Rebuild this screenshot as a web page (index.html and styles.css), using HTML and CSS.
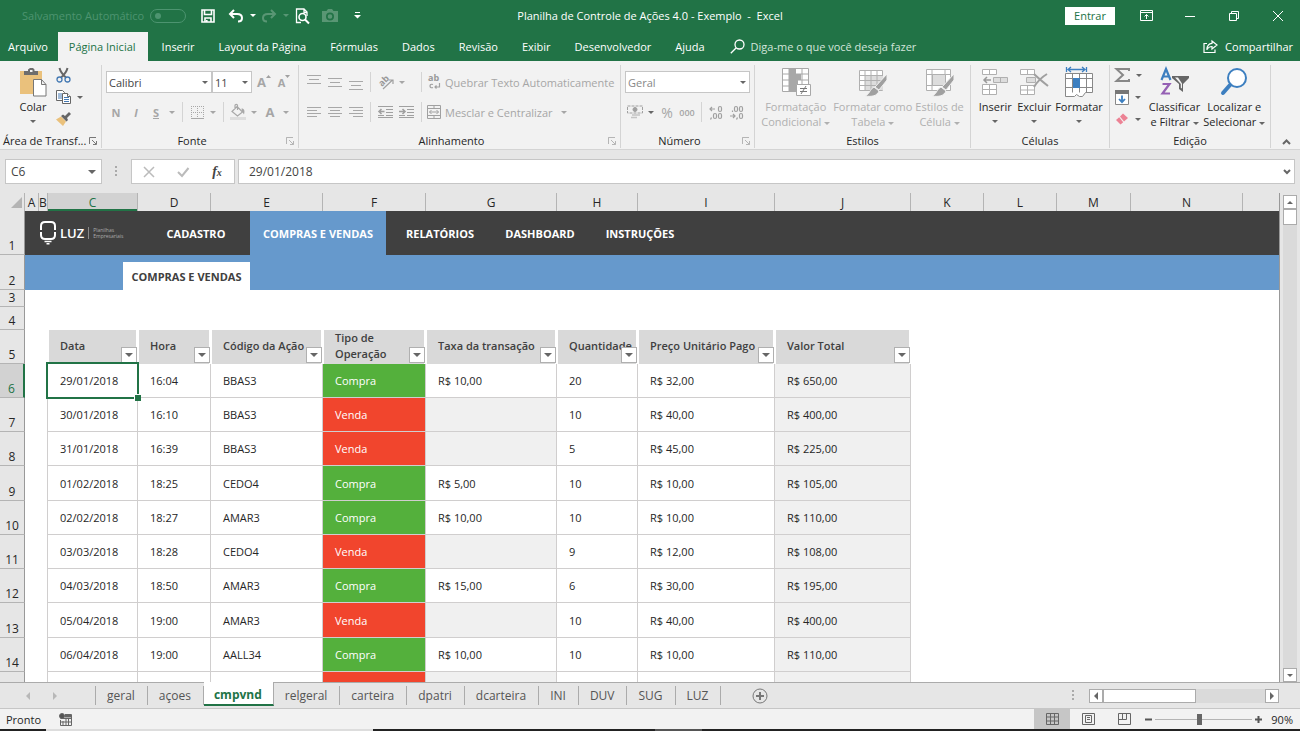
FILE: index.html
```html
<!DOCTYPE html>
<html lang="pt-BR">
<head>
    <meta charset="UTF-8">
    <meta name="viewport" content="width=device-width, initial-scale=1.0">
    <title>Planilha de Controle de Ações 4.0 - Exemplo - Excel</title>
    <link rel="stylesheet" href="styles.css">
</head>
<body>
    <header class="titlebar">
        <div class="quick-access">
            <label class="autosave">Salvamento Automático <input type="checkbox" disabled></label>
            <button class="qa-save" type="button" aria-label="Salvar">
                <svg width="14" height="14" viewBox="0 0 14 14" fill="none" stroke="#fff" stroke-width="1.6"><path d="M1 1h12v12H1zM3.500 1v4.500h7V1M4 13V9h6v4M5.800 11v2"/></svg>
            </button>
            <button class="qa-btn" type="button" aria-label="Desfazer">
                <svg width="16" height="14" viewBox="0 0 16 14" fill="none" stroke="#fff" stroke-width="2"><path d="M6 1L2 5l4 4M2.500 5h6.500c3 0 5 1.500 5 4 0 2.200-1.500 3.500-4 3.500"/></svg>
            </button>
            <button class="drop light" type="button" aria-label="Opções de desfazer"><i class="caret"></i></button>
            <button class="qa-btn faded" type="button" aria-label="Refazer">
                <svg width="16" height="14" viewBox="0 0 16 14" fill="none" stroke="#fff" stroke-width="2"><path d="M10 1l4 4-4 4M13.500 5H7c-3 0-5 1.500-5 4 0 2.200 1.500 3.500 4 3.500"/></svg>
            </button>
            <button class="drop light faded" type="button" aria-label="Opções de refazer"><i class="caret"></i></button>
            <button class="qa-btn" type="button" aria-label="Visualizar impressão">
                <svg width="15" height="16" viewBox="0 0 15 16" fill="none" stroke="#fff" stroke-width="1.300"><path d="M6 14.500H1.500V1H9l3 3v4M9 1v3.500h3"/><circle cx="7.500" cy="9" r="3.500" stroke-width="1.600"/><path d="M10 11.500l4 4" stroke-width="2"/></svg>
            </button>
            <button class="qa-cam faded" type="button" aria-label="Câmera">
                <svg width="16" height="13" viewBox="0 0 16 13"><path fill="#fff" fill-rule="evenodd" d="M0 2h4.500L6 0h4l1.500 2H16v11H0zM8 3.500a4 4 0 100 8 4 4 0 000-8zM8 5.200a2.300 2.300 0 110 4.600 2.300 2.300 0 010-4.600z"/></svg>
            </button>
            <button class="qa-more" type="button" aria-label="Personalizar barra">
                <svg width="7" height="7" viewBox="0 0 7 7" fill="#fff"><path d="M1 0h5v1H1zM0 3h7L3.500 6.500z"/></svg>
            </button>
        </div>
        <div class="doc-title">Planilha de Controle de Ações 4.0 - Exemplo &nbsp;-&nbsp; Excel</div>
        <div class="window-controls">
            <button class="sign-in" type="button">Entrar</button>
            <button class="win-btn" type="button" aria-label="Opções da faixa de opções">
                <svg width="13" height="11" viewBox="0 0 13 11" fill="none" stroke="#fff"><path d="M.5.5h12v10H.5zM.5 2.500h12M6.500 9V4.500M4.500 6.500l2-2 2 2"/></svg>
            </button>
            <button class="win-btn" type="button" aria-label="Minimizar">
                <svg width="10" height="10" viewBox="0 0 10 10" stroke="#fff"><path d="M0 5.500h10"/></svg>
            </button>
            <button class="win-btn" type="button" aria-label="Restaurar">
                <svg width="10" height="10" viewBox="0 0 10 10" fill="none" stroke="#fff"><path d="M.5 2.500h7v7h-7zM2.500 2.500v-2h7v7h-2"/></svg>
            </button>
            <button class="win-btn" type="button" aria-label="Fechar">
                <svg width="10" height="10" viewBox="0 0 10 10" stroke="#fff"><path d="M0 0l10 10M10 0L0 10"/></svg>
            </button>
        </div>
    </header>

    <nav class="ribbon-tabs">
        <a class="first" href="#">Arquivo</a>
        <a class="active" href="#">Página Inicial</a>
        <a href="#">Inserir</a>
        <a href="#">Layout da Página</a>
        <a href="#">Fórmulas</a>
        <a href="#">Dados</a>
        <a href="#">Revisão</a>
        <a href="#">Exibir</a>
        <a href="#">Desenvolvedor</a>
        <a href="#">Ajuda</a>
        <a class="tell-me" href="#">
            <svg width="15" height="15" viewBox="0 0 15 15" fill="none" stroke="#fff" stroke-width="1.300"><circle cx="9.500" cy="5.500" r="4.500"/><path d="M6.300 8.700L.8 14.200"/></svg>
            Diga-me o que você deseja fazer
        </a>
        <a class="share" href="#">
            <svg width="15" height="13" viewBox="0 0 15 13" fill="none" stroke="#fff" stroke-width="1.200"><path d="M4 3.500H1v9h11V9.500M9 1l5 4-5 4V6.500C6.500 6.500 5 7.500 3.800 9.800 4 6 6 3.500 9 3.300z"/></svg>
            Compartilhar
        </a>
    </nav>

    <section class="ribbon">
        <div class="group clipboard">
            <div class="group-body big-row">
                <button class="big-btn paste" type="button">
                    <svg width="28" height="30" viewBox="0 0 28 30"><path fill="#eac17c" d="M1 4h22v23H1z"/><path fill="#6d6d6d" d="M5 4h4V2.500L11 1h3l1.500 1.500V4H19v4H5z"/><path fill="#f2f2f2" d="M11 3h2.500v2H11z"/><path fill="#fff" stroke="#777" d="M14.500 12.500h8l4.500 5v11.500H14.500zM22.500 12.500v5H27"/></svg>
                    <span>Colar</span><i class="caret"></i>
                </button>
                <div class="stack">
                    <button class="small-btn" type="button" aria-label="Recortar">
                        <svg width="15" height="15" viewBox="0 0 15 15" fill="none"><path d="M3.500 0c1 4 3.500 7 6.500 9.500M11.500 0c-1 4-3.500 7-6.500 9.500" stroke="#666" stroke-width="2"/><circle cx="3.500" cy="11.500" r="2.500" stroke="#4479b3" stroke-width="1.300"/><circle cx="11.500" cy="11.500" r="2.500" stroke="#4479b3" stroke-width="1.300"/></svg>
                    </button>
                    <button class="small-btn" type="button" aria-label="Copiar">
                        <svg width="15" height="14" viewBox="0 0 15 14" fill="#fff" stroke="#666"><path d="M.5.5h6l2 2v8h-8z"/><path d="M2 4h4M2 6h4M2 8h4" stroke="#4479b3"/><path d="M6.500 3.500h5l3 3v7h-8z"/><path d="M11.500 3.500v3h3"/><path d="M8 7.500h5M8 9.500h5M8 11.500h5" stroke="#4479b3"/></svg>
                        <i class="caret"></i>
                    </button>
                    <button class="small-btn" type="button" aria-label="Pincel de formatação">
                        <svg width="15" height="14" viewBox="0 0 15 14"><path fill="#eac17c" d="M0 7.500l5-3 5 5L7 14z"/><path fill="#666" d="M5 4l2-1.500 2 1.500L13 0l2 2-4 4 1 2-1.500 1.500z"/></svg>
                    </button>
                </div>
            </div>
            <div class="group-label">Área de Transf... <svg class="launcher" width="9" height="9" viewBox="0 0 9 9" fill="none" stroke="#777"><path d="M.5 7V.5H7M3 3l4 4M7.500 4v3.500H4"/></svg></div>
        </div>

        <div class="group font">
            <div class="group-body rows">
                <div class="row">
                    <select class="font-name" aria-label="Fonte"><option>Calibri</option></select>
                    <select class="font-size" aria-label="Tamanho da fonte"><option>11</option></select>
                    <button class="icon-btn" type="button" aria-label="Aumentar fonte"><b class="grow">A</b><svg width="5" height="14" viewBox="0 0 5 14"><path fill="#a0a0a0" d="M0 3h5L2.500 0z"/></svg></button>
                    <button class="icon-btn" type="button" aria-label="Diminuir fonte"><b>A</b><svg width="5" height="14" viewBox="0 0 5 14"><path fill="#a0a0a0" d="M0 0h5L2.500 3z"/></svg></button>
                </div>
                <div class="row">
                    <button class="icon-btn" type="button"><b>N</b></button>
                    <button class="icon-btn" type="button"><b class="italic">I</b></button>
                    <button class="icon-btn" type="button"><b><u>S</u></b></button>
                    <button class="drop" type="button" aria-label="Sublinhado"><i class="caret"></i></button>
                    <span class="sep"></span>
                    <button class="icon-btn" type="button" aria-label="Bordas"><svg width="13" height="13" viewBox="0 0 13 13" fill="none" stroke="#a8a8a8"><path stroke-dasharray="1 1" d="M.5 0v12M6.500 0v12M12.500 0v12M0 .5h13M0 6.500h13"/><path d="M0 12.500h13"/></svg></button>
                    <button class="drop" type="button" aria-label="Opções de bordas"><i class="caret"></i></button>
                    <span class="sep"></span>
                    <button class="icon-btn" type="button" aria-label="Cor de preenchimento"><svg width="16" height="16" viewBox="0 0 16 16" fill="none" stroke="#a8a8a8" stroke-width="1.200"><path d="M7 2.500l5.500 5.500-5 4L2 7.500zM5 5V1.500c0-1.500 2.500-1.500 2.500 0V6"/><path fill="#a8a8a8" stroke="none" d="M11.500 4.500c3 0 3.500 2.500 2.500 6-.8-1-1-2-2-3z"/><path stroke="#ddd" stroke-width="3" d="M0 14.500h16"/></svg></button>
                    <button class="drop" type="button" aria-label="Opções de preenchimento"><i class="caret"></i></button>
                    <button class="icon-btn" type="button"><b class="grow">A</b></button>
                    <button class="drop" type="button" aria-label="Cor da fonte"><i class="caret"></i></button>
                </div>
            </div>
            <div class="group-label">Fonte <svg class="launcher off" width="9" height="9" viewBox="0 0 9 9" fill="none" stroke="#777"><path d="M.5 7V.5H7M3 3l4 4M7.500 4v3.500H4"/></svg></div>
        </div>

        <div class="group alignment">
            <div class="group-body rows">
                <div class="row">
                    <button class="icon-btn" type="button" aria-label="Alinhar em cima"><svg width="14" height="15" viewBox="0 0 14 15" stroke="#a8a8a8"><path d="M0 .5h14M2 4.500h10M0 8.500h14"/></svg></button>
                    <button class="icon-btn" type="button" aria-label="Alinhar no meio"><svg width="14" height="15" viewBox="0 0 14 15" stroke="#a8a8a8"><path d="M0 3.500h14M2 7.500h10M0 11.500h14"/></svg></button>
                    <button class="icon-btn" type="button" aria-label="Alinhar embaixo"><svg width="14" height="15" viewBox="0 0 14 15" stroke="#a8a8a8"><path d="M0 6.500h14M2 10.500h10M0 14.500h14"/></svg></button>
                    <span class="sep"></span>
                    <button class="icon-btn" type="button" aria-label="Orientação"><svg width="16" height="16" viewBox="0 0 16 16"><text x="1" y="10" transform="rotate(-45 6 8)" class="glyph">ab</text><path d="M5 15L14.500 6M11 6h4v4" fill="none" stroke="#a0a0a0" stroke-width="1.200"/></svg></button>
                    <button class="drop" type="button" aria-label="Opções de orientação"><i class="caret"></i></button>
                    <span class="sep wide"></span>
                    <button class="text-btn" type="button"><svg width="14" height="16" viewBox="0 0 14 16"><text x="1" y="7" class="glyph">ab</text><path d="M6 10.500c-4-1.500-4 4.500 0 3M12.500 9v4H8M9.500 11.500L8 13l1.500 1.500" fill="none" stroke="#a0a0a0" stroke-width="1.200"/></svg>Quebrar Texto Automaticamente</button>
                </div>
                <div class="row">
                    <button class="icon-btn" type="button" aria-label="Alinhar à esquerda"><svg width="14" height="12" viewBox="0 0 14 12" stroke="#a8a8a8"><path d="M0 1.500h14M0 4.500h10M0 7.500h14M0 10.500h10"/></svg></button>
                    <button class="icon-btn" type="button" aria-label="Centralizar"><svg width="14" height="12" viewBox="0 0 14 12" stroke="#a8a8a8"><path d="M0 1.500h14M2 4.500h10M0 7.500h14M2 10.500h10"/></svg></button>
                    <button class="icon-btn" type="button" aria-label="Alinhar à direita"><svg width="14" height="12" viewBox="0 0 14 12" stroke="#a8a8a8"><path d="M0 1.500h14M4 4.500h10M0 7.500h14M4 10.500h10"/></svg></button>
                    <span class="sep"></span>
                    <button class="icon-btn" type="button" aria-label="Diminuir recuo"><svg width="15" height="12" viewBox="0 0 15 12" fill="none" stroke="#a0a0a0"><path d="M0 .5h15M8 3.500h7M8 6.500h7M0 9.500h6M8 9.500h7M0 11.500h15"/><path stroke-width="1.600" d="M1 5.500h5.500M3.500 3L1 5.500 3.500 8"/></svg></button>
                    <button class="icon-btn" type="button" aria-label="Aumentar recuo"><svg width="15" height="12" viewBox="0 0 15 12" fill="none" stroke="#a0a0a0"><path d="M0 .5h15M8 3.500h7M8 6.500h7M0 9.500h6M8 9.500h7M0 11.500h15"/><path stroke-width="1.600" d="M0 5.500h5.500M3.500 3L6 5.500 3.500 8"/></svg></button>
                    <span class="sep"></span>
                    <button class="text-btn" type="button"><svg width="14" height="14" viewBox="0 0 14 14" fill="none" stroke="#a0a0a0"><path d="M.5.5h13v13H.5zM.5 3.500h13M.5 10.500h13M7 .5v3M7 10.500v3M2.500 7h9M4.500 5l-2 2 2 2M9.500 5l2 2-2 2"/></svg>Mesclar e Centralizar <i class="caret"></i></button>
                </div>
            </div>
            <div class="group-label">Alinhamento <svg class="launcher off" width="9" height="9" viewBox="0 0 9 9" fill="none" stroke="#777"><path d="M.5 7V.5H7M3 3l4 4M7.500 4v3.500H4"/></svg></div>
        </div>

        <div class="group number">
            <div class="group-body rows">
                <div class="row">
                    <select class="format" aria-label="Formato de número" disabled><option>Geral</option></select>
                </div>
                <div class="row">
                    <button class="icon-btn" type="button" aria-label="Formato de contabilização"><svg width="16" height="15" viewBox="0 0 16 15" fill="none" stroke="#a0a0a0"><path stroke-dasharray="3 1" d="M.5 1h15v7H.5z"/><circle cx="8" cy="4.500" r="2" fill="#a0a0a0"/><path stroke="#c4c4c4" stroke-width="1.500" d="M5 10h8M4 12.500h6"/></svg></button>
                    <button class="drop dark" type="button" aria-label="Moedas"><i class="caret"></i></button>
                    <button class="icon-btn percent" type="button">%</button>
                    <button class="icon-btn zeros" type="button">000</button>
                    <span class="sep"></span>
                    <button class="icon-btn" type="button" aria-label="Aumentar casas decimais"><svg width="15" height="15" viewBox="0 0 15 15" fill="none" stroke="#a0a0a0" stroke-width="1.200"><path d="M1 4h5M3 2L1 4l2 2"/><rect x="9.500" y="1.500" width="3" height="5" rx="1.500"/><path d="M2.500 12.500l-1 2"/><rect x="4.500" y="8.500" width="3" height="5" rx="1.500"/><rect x="9.500" y="8.500" width="3" height="5" rx="1.500"/></svg></button>
                    <button class="icon-btn" type="button" aria-label="Diminuir casas decimais"><svg width="15" height="15" viewBox="0 0 15 15" fill="none" stroke="#a0a0a0" stroke-width="1.200"><path d="M1 11h5M4 9l2 2-2 2M3.500 5.500v1.500"/><rect x="5.500" y="1.500" width="3" height="5" rx="1.500"/><rect x="10.500" y="1.500" width="3" height="5" rx="1.500"/><path d="M8.500 12.500l-1 2"/><rect x="10.500" y="8.500" width="3" height="5" rx="1.500"/></svg></button>
                </div>
            </div>
            <div class="group-label">Número <svg class="launcher off" width="9" height="9" viewBox="0 0 9 9" fill="none" stroke="#777"><path d="M.5 7V.5H7M3 3l4 4M7.500 4v3.500H4"/></svg></div>
        </div>

        <div class="group styles">
            <div class="group-body big-row off">
                <button class="big-btn" type="button">
                    <svg width="30" height="30" viewBox="0 0 30 30" fill="none" stroke="#a8a8a8"><path fill="#fff" d="M1.500 1.500h26v23h-26z"/><path d="M1.500 7h26M1.500 13h26M1.500 19h26M8 1.500v23M14.500 1.500v23M21 1.500v23"/><path fill="#a8a8a8" stroke="none" d="M8 1h6v6h6v6h-3v5h-3v6H8z"/><path fill="#fff" d="M15.500 17.500h14v11h-14z"/><path stroke="#777" d="M19 21.500h7M19 24.500h7M25 19l-5 8"/></svg>
                    <span>Formatação<br>Condicional <i class="caret"></i></span>
                </button>
                <button class="big-btn" type="button">
                    <svg width="30" height="30" viewBox="0 0 30 30" fill="none" stroke="#b0b0b0"><path fill="#fff" d="M1.500 3.500h23v20h-23z"/><path fill="#ddd" stroke="none" d="M7 9h18v14H7z"/><path d="M1.500 8.500h23M1.500 13.500h23M1.500 18.500h23M7 3.500v20M13 3.500v20M19 3.500v20"/><path fill="#a0a0a0" stroke="#f2f2f2" d="M29 7v6l-8 10-4-3zM16 20l5 4c-2 5-7 6-14 5 4-1 5-7 9-9z"/></svg>
                    <span>Formatar como<br>Tabela <i class="caret"></i></span>
                </button>
                <button class="big-btn" type="button">
                    <svg width="30" height="30" viewBox="0 0 30 30" fill="none" stroke="#b0b0b0"><path fill="#fff" d="M1.500 2.500h24v21h-24z"/><path d="M1.500 7.500h24M1.500 18.500h24M7 2.500v21M20 2.500v21"/><path fill="#ddd" d="M7.500 7.500h13v11h-13z"/><path fill="#a0a0a0" stroke="#f2f2f2" d="M29 7v6l-8 10-4-3zM16 20l5 4c-2 5-7 6-14 5 4-1 5-7 9-9z"/></svg>
                    <span>Estilos de<br>Célula <i class="caret"></i></span>
                </button>
            </div>
            <div class="group-label">Estilos</div>
        </div>

        <div class="group cells">
            <div class="group-body big-row">
                <button class="big-btn" type="button">
                    <svg width="26" height="30" viewBox="0 0 26 30" fill="#fff" stroke="#b0b0b0"><path d="M.5 2.500h14v5H.5zM7.500 2.500v5M.5 17.500h14v10H.5zM.5 22.500h14M7.500 17.500v10"/><path fill="#ddd" d="M11.500 10.500h14v5h-14zM18.500 10.500v5"/><path fill="none" stroke="#999" stroke-width="1.500" d="M2 13h7M5 10l-3 3 3 3"/></svg>
                    <span>Inserir</span><i class="caret"></i>
                </button>
                <button class="big-btn" type="button">
                    <svg width="30" height="30" viewBox="0 0 30 30" fill="#fff" stroke="#b0b0b0"><path d="M1.500 2.500h14v5h-14zM8.500 2.500v5M1.500 18.500h14v9h-14zM1.500 23h14M8.500 18.500v9"/><path fill="#ddd" d="M7.500 10.500h9v5h-9z"/><path fill="none" stroke="#a0a0a0" stroke-width="2" d="M15 7c4 4 9 8 14 12M28 7c-5 3-10 8-13 13"/></svg>
                    <span>Excluir</span><i class="caret"></i>
                </button>
                <button class="big-btn" type="button">
                    <svg width="28" height="30" viewBox="0 0 28 30" fill="#fff" stroke="#888"><path d="M.5 6.500h27v19h-7l-3 4h-3l-3-2-2 2h-9z"/><path d="M.5 11.500h27M.5 20.500h27M7.500 6.500v19M14.500 6.500v19M21.500 6.500v19"/><path fill="#3d7fc0" stroke="none" d="M8 11h7v10H8z"/><path fill="none" stroke="#3d7fc0" stroke-width="1.300" d="M1.500 0v5M21.500 0v5M3 2.500h17M6 0L3 2.500 6 5M17 0l3 2.500L17 5"/></svg>
                    <span>Formatar</span><i class="caret"></i>
                </button>
            </div>
            <div class="group-label">Células</div>
        </div>

        <div class="group editing">
            <div class="group-body big-row">
                <div class="stack">
                    <button class="small-btn" type="button" aria-label="Soma"><svg width="15" height="14" viewBox="0 0 15 14" fill="none" stroke="#888" stroke-width="2"><path d="M14 3V1H1.500L8 7l-6.500 6H14v-2"/></svg><i class="caret"></i></button>
                    <button class="small-btn" type="button" aria-label="Preencher"><svg width="14" height="15" viewBox="0 0 14 15" fill="#fff" stroke="#888"><path d="M.5.5h13v14H.5z"/><path fill="#777" stroke="none" d="M0 0h14v4H0z"/><path fill="none" stroke="#3d7fc0" stroke-width="1.800" d="M7 5.500V12M4 9l3 3.200L10 9"/></svg><i class="caret"></i></button>
                    <button class="small-btn" type="button" aria-label="Limpar"><svg width="14" height="14" viewBox="0 0 14 14"><path fill="#ec8294" d="M8 1.500L13 6l-4 3.500-4-5z"/><path fill="#ec8294" d="M4.200 5.200l4 5-2.700 2.300L1 8z"/></svg><i class="caret"></i></button>
                </div>
                <button class="big-btn" type="button">
                    <svg width="30" height="30" viewBox="0 0 30 30" fill="none" stroke-width="2.200"><path stroke="#3d7fc0" d="M2.500 13L7 2l4.500 11M4 9.500h6"/><path stroke="#9560b4" d="M3.500 17h7L3.500 26.500H11"/><path fill="#666" d="M13 9h17v2l-6 6v8l-4-3v-5l-7-6z"/><path fill="#f2f2f2" d="M16 10.500h3l4 6v5l-1.200-.8V17z"/></svg>
                    <span>Classificar<br>e Filtrar <i class="caret"></i></span>
                </button>
                <button class="big-btn" type="button">
                    <svg width="28" height="30" viewBox="0 0 28 30"><circle cx="17" cy="11" r="9" fill="#fff" stroke="#3d7fc0" stroke-width="2"/><path d="M10 18l-7 8" stroke="#3d7fc0" stroke-width="4" stroke-linecap="round"/></svg>
                    <span>Localizar e<br>Selecionar <i class="caret"></i></span>
                </button>
            </div>
            <div class="group-label">Edição</div>
        </div>

        <button class="collapse" type="button" aria-label="Recolher faixa">
            <svg width="9" height="6" viewBox="0 0 9 6" fill="none" stroke="#666" stroke-width="2"><path d="M1 5l3.500-3.500L8 5"/></svg>
        </button>
    </section>

    <section class="formula-bar">
        <div class="name-box">
            <input type="text" value="C6" aria-label="Caixa de nome">
            <button class="drop dark" type="button" aria-label="Nomes"><i class="caret big"></i></button>
        </div>
        <span class="dots"></span>
        <div class="formula-actions">
            <button type="button" aria-label="Cancelar"><svg width="12" height="10" viewBox="0 0 12 10" stroke="#bbb" stroke-width="1.500"><path d="M1 0l10 10M11 0L1 10"/></svg></button>
            <button type="button" aria-label="Inserir"><svg width="12" height="10" viewBox="0 0 12 10" fill="none" stroke="#bbb" stroke-width="2"><path d="M1 5l4 4 6.500-8"/></svg></button>
            <button class="fx" type="button">f<small>x</small></button>
        </div>
        <div class="formula-field">
            <input type="text" value="29/01/2018" aria-label="Barra de fórmulas">
            <button type="button" aria-label="Expandir"><svg width="8" height="6" viewBox="0 0 8 6" fill="none" stroke="#666" stroke-width="2"><path d="M1 1l3 3 3-3"/></svg></button>
        </div>
    </section>

    <main class="workbook">
        <div class="sheet">
            <table>
                <colgroup>
                    <col class="w-head"><col class="w-a"><col class="w-b"><col class="w-c"><col class="w-d"><col class="w-e"><col class="w-f"><col class="w-g"><col class="w-h"><col class="w-i"><col class="w-j"><col class="w-k"><col class="w-k"><col class="w-m"><col class="w-n"><col>
                </colgroup>
                <thead>
                    <tr class="letters">
                        <th class="corner"><svg width="11" height="11" viewBox="0 0 11 11"><path fill="#b4b4b4" d="M11 0v11H0z"/></svg></th>
                        <th>A</th><th>B</th><th class="current">C</th><th>D</th><th>E</th><th>F</th><th>G</th><th>H</th><th>I</th><th>J</th><th>K</th><th>L</th><th>M</th><th>N</th><th></th>
                    </tr>
                </thead>
                <tbody class="top">
                    <tr class="r1">
                        <th>1</th>
                        <td colspan="15">
                            <nav class="menu">
                                <span class="logo">
                                    <svg width="16" height="24" viewBox="0 0 16 24" fill="none" stroke="#fff" stroke-width="2"><path d="M1 9V5c0-2.500 1.500-4 4-4h6c2.500 0 4 1.500 4 4v4M1 11v3c0 2.500 1.500 4 4 4h6c2.500 0 4-1.500 4-4v-3"/><path stroke-width="1.500" d="M4.500 20.500h7M6.500 22.800h3"/></svg>
                                    <strong>LUZ</strong>
                                    <small>Planilhas<br>Empresariais</small>
                                </span>
                                <a href="#">CADASTRO</a>
                                <a class="active" href="#">COMPRAS E VENDAS</a>
                                <a href="#">RELATÓRIOS</a>
                                <a href="#">DASHBOARD</a>
                                <a href="#">INSTRUÇÕES</a>
                            </nav>
                        </td>
                    </tr>
                    <tr class="r2"><th>2</th><td colspan="15"><a class="submenu" href="#">COMPRAS E VENDAS</a></td></tr>
                    <tr class="r3"><th>3</th><td colspan="15"></td></tr>
                    <tr class="r4"><th>4</th><td colspan="15"></td></tr>
                    <tr class="r5">
                        <th>5</th><td colspan="2"></td>
                        <td class="field">Data<button class="filter" type="button" aria-label="Filtrar Data"><i class="caret big"></i></button></td>
                        <td class="field">Hora<button class="filter" type="button" aria-label="Filtrar Hora"><i class="caret big"></i></button></td>
                        <td class="field">Código da Ação<button class="filter" type="button" aria-label="Filtrar Código"><i class="caret big"></i></button></td>
                        <td class="field">Tipo de<br>Operação<button class="filter" type="button" aria-label="Filtrar Tipo"><i class="caret big"></i></button></td>
                        <td class="field">Taxa da transação<button class="filter" type="button" aria-label="Filtrar Taxa"><i class="caret big"></i></button></td>
                        <td class="field">Quantidade<button class="filter" type="button" aria-label="Filtrar Quantidade"><i class="caret big"></i></button></td>
                        <td class="field">Preço Unitário Pago<button class="filter" type="button" aria-label="Filtrar Preço"><i class="caret big"></i></button></td>
                        <td class="field">Valor Total<button class="filter" type="button" aria-label="Filtrar Valor"><i class="caret big"></i></button></td>
                        <td colspan="5"></td>
                    </tr>
                </tbody>
                <tbody class="data">
                    <tr class="current"><th>6</th><td colspan="2"></td><td class="selected">29/01/2018</td><td>16:04</td><td>BBAS3</td><td class="buy">Compra</td><td>R$ 10,00</td><td>20</td><td>R$ 32,00</td><td class="calc">R$ 650,00</td><td colspan="5"></td></tr>
                    <tr><th>7</th><td colspan="2"></td><td>30/01/2018</td><td>16:10</td><td>BBAS3</td><td class="sell">Venda</td><td class="calc"></td><td>10</td><td>R$ 40,00</td><td class="calc">R$ 400,00</td><td colspan="5"></td></tr>
                    <tr><th>8</th><td colspan="2"></td><td>31/01/2018</td><td>16:39</td><td>BBAS3</td><td class="sell">Venda</td><td class="calc"></td><td>5</td><td>R$ 45,00</td><td class="calc">R$ 225,00</td><td colspan="5"></td></tr>
                    <tr><th>9</th><td colspan="2"></td><td>01/02/2018</td><td>18:25</td><td>CEDO4</td><td class="buy">Compra</td><td>R$ 5,00</td><td>10</td><td>R$ 10,00</td><td class="calc">R$ 105,00</td><td colspan="5"></td></tr>
                    <tr><th>10</th><td colspan="2"></td><td>02/02/2018</td><td>18:27</td><td>AMAR3</td><td class="buy">Compra</td><td>R$ 10,00</td><td>10</td><td>R$ 10,00</td><td class="calc">R$ 110,00</td><td colspan="5"></td></tr>
                    <tr><th>11</th><td colspan="2"></td><td>03/03/2018</td><td>18:28</td><td>CEDO4</td><td class="sell">Venda</td><td class="calc"></td><td>9</td><td>R$ 12,00</td><td class="calc">R$ 108,00</td><td colspan="5"></td></tr>
                    <tr><th>12</th><td colspan="2"></td><td>04/03/2018</td><td>18:50</td><td>AMAR3</td><td class="buy">Compra</td><td>R$ 15,00</td><td>6</td><td>R$ 30,00</td><td class="calc">R$ 195,00</td><td colspan="5"></td></tr>
                    <tr><th>13</th><td colspan="2"></td><td>05/04/2018</td><td>19:00</td><td>AMAR3</td><td class="sell">Venda</td><td class="calc"></td><td>10</td><td>R$ 40,00</td><td class="calc">R$ 400,00</td><td colspan="5"></td></tr>
                    <tr><th>14</th><td colspan="2"></td><td>06/04/2018</td><td>19:00</td><td>AALL34</td><td class="buy">Compra</td><td>R$ 10,00</td><td>10</td><td>R$ 10,00</td><td class="calc">R$ 110,00</td><td colspan="5"></td></tr>
                    <tr><th></th><td colspan="2"></td><td></td><td></td><td></td><td class="sell"></td><td class="calc"></td><td></td><td></td><td class="calc"></td><td colspan="5"></td></tr>
                </tbody>
            </table>
        </div>
        <div class="vscroll">
            <button type="button" aria-label="Rolar para cima"><i class="caret up"></i></button>
            <span class="thumb"></span>
            <button class="end" type="button" aria-label="Rolar para baixo"><i class="caret"></i></button>
        </div>
    </main>

    <footer>
        <div class="sheet-tabs">
            <div class="tab-arrows">
                <button type="button" aria-label="Planilha anterior"><i class="caret left"></i></button>
                <button type="button" aria-label="Próxima planilha"><i class="caret right"></i></button>
            </div>
            <a href="#">geral</a>
            <a href="#">açoes</a>
            <a class="active" href="#">cmpvnd</a>
            <a href="#">relgeral</a>
            <a href="#">carteira</a>
            <a href="#">dpatri</a>
            <a href="#">dcarteira</a>
            <a href="#">INI</a>
            <a href="#">DUV</a>
            <a href="#">SUG</a>
            <a href="#">LUZ</a>
            <button class="add" type="button" aria-label="Nova planilha">
                <svg width="16" height="16" viewBox="0 0 16 16" fill="none" stroke="#777"><circle cx="8" cy="8" r="7"/><path stroke-width="2" d="M8 4v8M4 8h8"/></svg>
            </button>
            <span class="dots"></span>
            <div class="hscroll">
                <button type="button" aria-label="Rolar para a esquerda"><i class="caret left"></i></button>
                <span class="thumb"></span>
                <button class="end" type="button" aria-label="Rolar para a direita"><i class="caret right"></i></button>
            </div>
        </div>
        <div class="status-bar">
            <span>Pronto</span>
            <svg class="macro" width="13" height="13" viewBox="0 0 13 13" fill="none" stroke="#666"><path d="M6 1.500h6.500v11H1.500V7M1.500 5.500h11M4 8v4M7 6v6M9.500 6v6M2 9h10"/><path stroke-width="3" d="M6 3h6"/><circle cx="3" cy="3" r="2.500" fill="#555"/></svg>
            <div class="views">
                <button class="active" type="button" aria-label="Normal"><svg width="13" height="12" viewBox="0 0 13 12" fill="none" stroke="#666"><path d="M.5.5h12v11H.5zM.5 4h12M.5 8h12M4.500.5v11M8.500.5v11"/></svg></button>
                <button type="button" aria-label="Layout da Página"><svg width="13" height="12" viewBox="0 0 13 12" fill="none" stroke="#666"><path d="M.5.5h12v11H.5zM3.500 2.500h6v7h-6zM5 4.500h3M5 6.500h3"/></svg></button>
                <button type="button" aria-label="Quebra de página"><svg width="13" height="12" viewBox="0 0 13 12" fill="none" stroke="#666"><path d="M.5.5h12v11H.5zM.5 6.500h8v-6M4.500.5v6"/></svg></button>
            </div>
            <button class="zoom-btn" type="button" aria-label="Reduzir"><svg width="7" height="7" viewBox="0 0 7 7" stroke="#555" stroke-width="2"><path d="M0 3.500h7"/></svg></button>
            <input class="zoom" type="range" min="10" max="200" value="96" aria-label="Zoom">
            <button class="zoom-btn" type="button" aria-label="Ampliar"><svg width="7" height="7" viewBox="0 0 7 7" stroke="#555" stroke-width="2"><path d="M0 3.500h7M3.500 0v7"/></svg></button>
            <span class="zoom-value">90%</span>
        </div>
        <div class="taskbar-edge"></div>
    </footer>
</body>
</html>
```
FILE: styles.css
```css
:root {
    --green: #217346;
    --ribbon: #f2f2f2;
    --chrome: #e6e6e6;
    --line: #c6c6c6;
    --text: #262626;
    --muted: #a6a6a6;
    --dark: #404040;
    --blue: #6699cc;
}

* {
    box-sizing: border-box;
}

body {
    margin: 0;
    height: 100vh;
    display: flex;
    flex-direction: column;
    overflow: hidden;
    background: var(--chrome);
    color: var(--text);
    font: 11px/15px "Open Sans", "Noto Sans", sans-serif;
}

button,
input,
select {
    margin: 0;
    padding: 0;
    border: 0;
    background: none;
    color: inherit;
    font: inherit;
}

a {
    color: inherit;
    text-decoration: none;
}

svg {
    display: block;
    flex: none;
    overflow: visible;
}

.caret {
    display: inline-block;
    flex: none;
    border: 3px solid transparent;
    border-top-color: currentColor;
    border-bottom: 0;
}

.caret.big {
    border-width: 4px 4px 0;
}

.caret.up {
    border-top: 0;
    border-bottom: 3px solid currentColor;
}

.caret.left {
    border: 4px solid transparent;
    border-left: 0;
    border-right-color: currentColor;
}

.caret.right {
    border: 4px solid transparent;
    border-right: 0;
    border-left-color: currentColor;
}

.faded {
    opacity: 0.25;
}

/* Title bar */
.titlebar {
    display: grid;
    grid-template-columns: 1fr auto 1fr;
    align-items: center;
    flex: none;
    height: 31px;
    background: var(--green);
    color: #fff;
}

.quick-access {
    display: flex;
    align-items: center;
    padding-left: 22px;
}

.quick-access button {
    display: flex;
    justify-content: center;
}

.autosave {
    display: flex;
    align-items: center;
    gap: 6px;
    margin-right: 12px;
    color: #4d9470;
    white-space: nowrap;
}

.autosave input {
    appearance: none;
    display: flex;
    align-items: center;
    width: 36px;
    height: 14px;
    padding: 0 4px;
    border: 1px solid #4d9470;
    border-radius: 7px;
}

.autosave input::before {
    content: "";
    width: 6px;
    height: 6px;
    border-radius: 50%;
    background: #4d9470;
}

.qa-save {
    width: 20px;
    margin-right: 8px;
}

.qa-btn {
    width: 20px;
}

.qa-cam {
    width: 20px;
    margin: 0 14px 0 8px;
}

.titlebar .drop {
    width: 13px;
}

.window-controls {
    display: flex;
    align-items: center;
    justify-content: flex-end;
}

.sign-in {
    width: 50px;
    height: 18px;
    margin-right: 9px;
    background: #fff;
    color: var(--green);
    font-weight: 500;
}

.win-btn {
    display: flex;
    align-items: center;
    justify-content: center;
    width: 44px;
    height: 28px;
}

/* Ribbon tabs */
.ribbon-tabs {
    display: flex;
    flex: none;
    height: 30px;
    padding-top: 1px;
    background: var(--green);
    color: #fff;
    font-weight: 500;
}

.ribbon-tabs a {
    display: flex;
    align-items: center;
    padding: 0 12px;
    white-space: nowrap;
}

.ribbon-tabs .first {
    padding: 0 10px 0 8px;
}

.ribbon-tabs .active {
    margin-right: 2px;
    padding: 0 12px 0 11px;
    background: var(--ribbon);
    color: var(--green);
}

.ribbon-tabs .tell-me {
    gap: 6px;
    padding-left: 13px;
    color: #d3e5db;
}

.ribbon-tabs .share {
    gap: 7px;
    margin-left: auto;
    padding-right: 7px;
}

/* Ribbon */
.ribbon {
    display: flex;
    flex: none;
    height: 89px;
    padding: 4px 0 1px;
    background: var(--ribbon);
    border-bottom: 1px solid #d4d4d4;
}

.group {
    display: flex;
    flex-direction: column;
    flex: none;
    border-right: 1px solid #d4d4d4;
}

.clipboard {
    width: 102px;
}

.font {
    width: 197px;
}

.alignment {
    width: 322px;
}

.number {
    width: 134px;
}

.styles {
    width: 216px;
}

.cells {
    width: 139px;
}

.editing {
    width: 161px;
}

.group-body {
    flex: 1;
    min-height: 0;
}

.group-label {
    display: flex;
    justify-content: center;
    align-items: center;
    flex: none;
    position: relative;
    height: 15px;
    padding-right: 16px;
    white-space: nowrap;
}

.clipboard .group-label {
    justify-content: flex-start;
    padding: 0 0 0 3px;
}

.styles .group-label,
.cells .group-label,
.editing .group-label {
    padding-right: 0;
}

.launcher {
    position: absolute;
    right: 3px;
    bottom: 2px;
}

.launcher.off {
    opacity: 0.5;
}

.big-row {
    display: flex;
    justify-content: center;
    gap: 3px;
    padding-top: 2px;
}

.big-row.off {
    color: #b0b0b0;
}

.big-btn {
    display: flex;
    flex-direction: column;
    align-items: center;
    min-width: 36px;
    white-space: nowrap;
}

.big-btn span {
    margin-top: 2px;
}

.big-btn > .caret {
    margin-top: 6px;
}

.big-btn .caret,
.small-btn .caret {
    color: #666;
}

.off .big-btn .caret {
    color: #b0b0b0;
}

.big-btn span .caret {
    vertical-align: middle;
}

.paste {
    width: 42px;
}

.clipboard .big-row {
    justify-content: flex-start;
    gap: 2px;
    padding-left: 12px;
}

.stack {
    display: flex;
    flex-direction: column;
    margin-top: -3px;
}

.small-btn {
    display: flex;
    align-items: center;
    gap: 6px;
    flex: none;
    height: 22px;
}

.editing .stack {
    padding-right: 4px;
}

.rows {
    display: flex;
    flex-direction: column;
    gap: 8px;
    padding: 6px 4px 0;
    color: var(--muted);
}

.row {
    display: flex;
    align-items: center;
    flex: none;
    height: 22px;
}

.row select {
    appearance: none;
    height: 22px;
    padding: 0 2px;
    border: 1px solid var(--line);
    color: #444;
    opacity: 1;
    background: #fff url("data:image/svg+xml,%3Csvg xmlns='http://www.w3.org/2000/svg' viewBox='0 0 6 3'%3E%3Cpath fill='%23666' d='M0 0h6L3 3z'/%3E%3C/svg%3E") no-repeat right 3px center / 6px 3px;
}

.row .font-name {
    width: 106px;
}

.row .font-size {
    width: 40px;
    margin-right: 2px;
}

.row .format {
    width: 125px;
    color: #888;
}

.icon-btn {
    display: flex;
    align-items: center;
    justify-content: center;
    flex: none;
    width: 20px;
    height: 20px;
}

.icon-btn b {
    font-weight: 700;
}

.icon-btn .grow {
    font-size: 13px;
}

.italic {
    font-style: italic;
}

.alignment .icon-btn {
    width: 21px;
}

.percent {
    font-size: 14px;
}

.zeros {
    font-size: 9px;
    font-weight: 600;
}

.drop {
    display: flex;
    align-items: center;
    justify-content: center;
    flex: none;
    width: 12px;
    height: 20px;
}

.drop.dark {
    color: #666;
}

.sep {
    flex: none;
    width: 1px;
    height: 20px;
    margin: 0 4px;
    background: #d4d4d4;
}

.sep.wide {
    margin-left: 13px;
}

.text-btn {
    display: flex;
    align-items: center;
    gap: 4px;
    padding-left: 1px;
    white-space: nowrap;
}

.text-btn .caret {
    margin-left: 4px;
}

.glyph {
    fill: #999;
    font: bold 9px "Open Sans", sans-serif;
}

.collapse {
    align-self: flex-end;
    margin: 0 9px 3px auto;
}

/* Formula bar */
.formula-bar {
    display: flex;
    align-items: center;
    flex: none;
    height: 43px;
    padding: 0 5px;
    color: #444;
    font-size: 12px;
}

.name-box,
.formula-actions,
.formula-field {
    display: flex;
    align-items: center;
    height: 25px;
    border: 1px solid var(--line);
    background: #fff;
}

.name-box {
    width: 97px;
    padding: 0 3px 0 5px;
}

.name-box input,
.formula-field input {
    flex: 1;
    min-width: 0;
}

.dots {
    width: 2px;
    height: 11px;
    background: repeating-linear-gradient(#aaa 0 2px, transparent 2px 4px);
}

.formula-bar .dots {
    margin: 0 14px 0 13px;
}

.formula-actions {
    width: 104px;
    margin-right: 3px;
}

.formula-actions button {
    display: flex;
    align-items: center;
    justify-content: center;
    flex: 1;
}

.formula-actions .fx {
    align-items: baseline;
    font: italic bold 14px "Liberation Serif", serif;
}

.fx small {
    font-size: 10px;
}

.formula-field {
    flex: 1;
    padding: 0 3px 0 10px;
}

/* Worksheet */
.workbook {
    display: flex;
    flex: 1;
    min-height: 0;
}

.sheet {
    flex: 1;
    min-width: 0;
    overflow: hidden;
    border-right: 1px solid #999;
    background: #fff;
}

table {
    width: 100%;
    table-layout: fixed;
    border-spacing: 0;
}

th,
td {
    padding: 0;
    font-weight: 400;
}

.w-head { width: 25px; }
.w-a { width: 14px; }
.w-b { width: 9px; }
.w-c { width: 90px; }
.w-d { width: 73px; }
.w-e { width: 112px; }
.w-f { width: 103px; }
.w-g { width: 131px; }
.w-h { width: 81px; }
.w-i { width: 137px; }
.w-j { width: 136px; }
.w-k { width: 73px; }
.w-m { width: 74px; }
.w-n { width: 112px; }

.letters th {
    height: 18px;
    border-right: 1px solid #b4b4b4;
    background: var(--chrome);
    font-size: 12px;
    line-height: 17px;
}

.letters th:last-child {
    border-right: 0;
}

.letters .current {
    background: #d2d2d2;
    box-shadow: inset 0 -2px var(--green);
    color: var(--green);
}

.corner svg {
    margin-left: 11px;
}

tbody th {
    border-right: 1px solid #999;
    border-bottom: 1px solid #b4b4b4;
    background: var(--chrome);
    font-size: 12px;
    line-height: 16px;
    vertical-align: bottom;
}

.current th {
    border-right: 2px solid var(--green);
    background: #d2d2d2;
    color: var(--green);
}

.r1 { height: 44px; }
.r2 { height: 35px; }
.r3 { height: 17px; }
.r4 { height: 23px; }
.r5 { height: 34px; }

.menu {
    display: flex;
    height: 44px;
    background: var(--dark);
    color: #fff;
    font-weight: 700;
}

.menu a {
    display: flex;
    align-items: center;
    justify-content: center;
    width: 100px;
}

.menu .active {
    width: 136px;
    margin: 0 4px;
    background: var(--blue);
}

.logo {
    display: flex;
    align-items: center;
    width: 121px;
    padding-left: 15px;
    gap: 4px;
}

.logo strong {
    font-size: 13px;
    font-weight: 600;
}

.logo small {
    padding-left: 4px;
    border-left: 1px solid #888;
    color: #aaa;
    font-size: 5px;
    font-weight: 400;
    line-height: 6px;
}

.r2 td {
    padding: 7px 0 0 98px;
    background: var(--blue);
}

.submenu {
    display: flex;
    align-items: center;
    justify-content: center;
    width: 127px;
    height: 28px;
    background: #fff;
    color: var(--dark);
    font-weight: 700;
}

.field {
    position: relative;
    padding: 0 0 2px 11px;
    border: 0 solid #fff;
    border-right-width: 2px;
    border-left-width: 1px;
    background: #d9d9d9;
    color: var(--dark);
    font-weight: 600;
    line-height: 16px;
    white-space: nowrap;
}

.filter {
    display: flex;
    align-items: center;
    justify-content: center;
    position: absolute;
    right: -1px;
    bottom: 1px;
    width: 16px;
    height: 16px;
    border: 1px solid #b0b0b0;
    background: #fff;
    color: #666;
}

.data tr {
    height: 34px;
}

.data tr:nth-child(4n) {
    height: 35px;
}

.data td {
    padding-left: 12px;
    border-right: 1px solid #d0cece;
    border-bottom: 1px solid #d0cece;
    white-space: nowrap;
}

.data td:nth-child(2) {
    border-bottom: 0;
}

.data td:last-child {
    border: 0;
}

.data .buy {
    background: #54b03c;
    color: #fff;
}

.data .sell {
    background: #f1452d;
    color: #fff;
}

.data .calc {
    background: #f0f0f0;
}

.data .selected {
    position: relative;
}

.selected::before {
    content: "";
    position: absolute;
    inset: -2px;
    border: 2px solid var(--green);
}

.selected::after {
    content: "";
    position: absolute;
    right: -4px;
    bottom: -4px;
    width: 6px;
    height: 6px;
    border: 1px solid #fff;
    border-width: 1px 0 0 1px;
    background: var(--green);
}

/* Scrollbars */
.vscroll {
    display: flex;
    flex-direction: column;
    flex: none;
    width: 14px;
    margin: 2px 3px 0 3px;
    background: #dadada;
}

.vscroll button,
.hscroll button {
    display: flex;
    align-items: center;
    justify-content: center;
    flex: none;
    width: 14px;
    height: 14px;
    border: 1px solid #ababab;
    background: #fff;
    color: #666;
}

.thumb {
    border: 1px solid #ababab;
    background: #fff;
}

.vscroll .thumb {
    height: 16px;
}

.vscroll .end {
    margin-top: auto;
}

.hscroll {
    display: flex;
    width: 190px;
    margin: 0 21px 0 15px;
    background: #dadada;
}

.hscroll .thumb {
    width: 93px;
}

.hscroll .end {
    margin-left: auto;
}

/* Sheet tabs */
footer {
    flex: none;
}

.sheet-tabs {
    display: flex;
    align-items: center;
    height: 27px;
    border-top: 1px solid #ababab;
    border-bottom: 1px solid var(--line);
    color: #555;
    font-size: 12px;
}

.sheet-tabs a {
    padding: 2px 12px 2px 11px;
    border-right: 1px solid #ababab;
}

.sheet-tabs .active {
    align-self: flex-start;
    margin-top: -1px;
    padding: 5px 11px 2px 10px;
    border-bottom: 2px solid var(--green);
    background: #fff;
    color: var(--green);
    font-weight: 700;
}

.tab-arrows {
    display: flex;
    align-items: center;
    gap: 23px;
    width: 96px;
    height: 19px;
    padding-left: 26px;
    border-right: 1px solid #ababab;
    color: #b8b8b8;
}

.tab-arrows button {
    display: flex;
}

.add {
    margin: 0 auto 0 31px;
}

/* Status bar */
.status-bar {
    display: flex;
    align-items: center;
    height: 20px;
    padding: 0 7px 0 6px;
    background: var(--ribbon);
    font-weight: 500;
}

.macro {
    margin-left: 18px;
}

.views {
    display: flex;
    margin-left: auto;
}

.views button {
    display: flex;
    align-items: center;
    justify-content: center;
    width: 36px;
    height: 20px;
}

.views .active {
    background: #c6c6c6;
}

.zoom-btn {
    width: 13px;
    padding: 0 3px;
}

.zoom {
    appearance: none;
    width: 97px;
    height: 14px;
    background: linear-gradient(#b4b4b4, #b4b4b4) no-repeat center / 100% 1px;
}

.zoom::-webkit-slider-thumb {
    appearance: none;
    width: 5px;
    height: 11px;
    background: #666;
}

.zoom-value {
    margin-left: 6px;
}

.taskbar-edge {
    height: 2px;
    background: linear-gradient(90deg, #222 46px, #ddd 46px 373px, #222 373px 655px, #555 655px 702px, #222 702px);
}
```
